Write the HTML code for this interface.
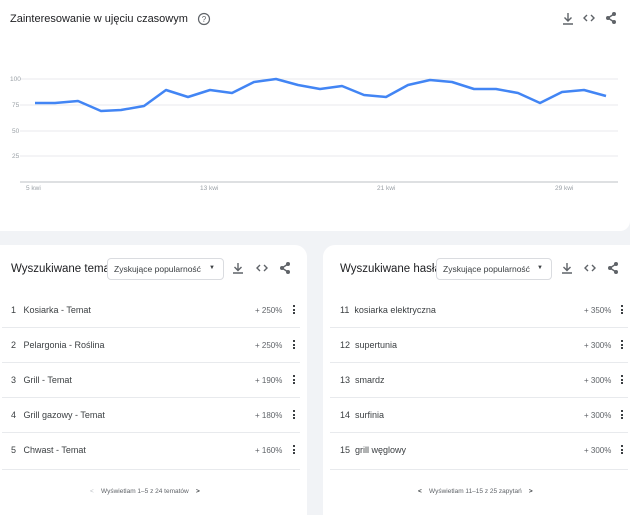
<!DOCTYPE html>
<html><head><meta charset="utf-8"><style>
*{margin:0;padding:0;box-sizing:border-box}
body{width:630px;height:504px;background:#f1f3f6;font-family:"Liberation Sans",sans-serif;position:relative;overflow:hidden;color:#202124}
.top{position:absolute;left:0;top:0;width:630px;height:231px;background:#fff;border-radius:0 0 10px 0}
.card{position:absolute;top:245px;height:270px;background:#fff}
.l{left:0;width:307px;border-radius:0 12px 0 0}
.r{left:323px;width:307px;border-radius:12px 0 0 0}
.ttl{position:absolute;top:263px;font-size:11.5px}
.dd{position:absolute;top:258px;height:22px;border:1px solid #dadce0;border-radius:4px;font-size:8.5px;padding:5px 6px;background:#fff;color:#3c4043;white-space:nowrap}
.dd span{position:absolute;right:8px;top:6px;font-size:6px}
.row{position:absolute;font-size:9px;color:#3c4043}
.pct{position:absolute;font-size:8px;color:#5f6368}
.div{position:absolute;height:1px;background:#e8eaed}
.dots{position:absolute;width:2px}
.dots i{display:block;width:2px;height:2px;background:#3c4043;margin-bottom:1.5px}
.pg{position:absolute;top:488px;font-size:6.5px;color:#5f6368}
</style></head><body>
<div class="top"></div>
<div style="position:absolute;left:10px;top:13px;font-size:11px;white-space:nowrap">Zainteresowanie w ujęciu czasowym</div>
<svg style="position:absolute;left:196px;top:11px" width="16" height="16" viewBox="0 0 16 16"><circle cx="8" cy="8" r="5.5" fill="none" stroke="#5f6368" stroke-width="1.2"/><text x="8" y="11" font-size="8" text-anchor="middle" fill="#5f6368" font-family="Liberation Sans">?</text></svg>
<svg style="position:absolute;left:0;top:0" width="630" height="230">
<g stroke="#5f6368" stroke-width="1.4" fill="none">
<path d="M568 13v8M564.5 17.5l3.5 3.5 3.5-3.5M563 24h10"/>
<path d="M587 15l-3 3 3 3M591 15l3 3-3 3"/>
<path d="M614 14l-6 4 6 4"/></g>
<g fill="#5f6368"><circle cx="614" cy="14" r="2"/><circle cx="614" cy="22" r="2"/><circle cx="608" cy="18" r="2"/></g>
<g stroke="#e8eaed" stroke-width="1"><line x1="20" y1="79" x2="618" y2="79"/><line x1="20" y1="105" x2="618" y2="105"/><line x1="20" y1="131" x2="618" y2="131"/><line x1="20" y1="156" x2="618" y2="156"/></g>
<line x1="20" y1="182" x2="618" y2="182" stroke="#bdc1c6"/>
<g font-size="6.5" fill="#9aa0a6" font-family="Liberation Sans"><text x="10" y="81">100</text><text x="12" y="107">75</text><text x="12" y="133">50</text><text x="12" y="158">25</text>
<text x="26" y="190">5 kwi</text><text x="200" y="190">13 kwi</text><text x="377" y="190">21 kwi</text><text x="555" y="190">29 kwi</text></g>
<polyline fill="none" stroke="#4285f4" stroke-width="2.5" stroke-linejoin="round" points="35,103 55,103 78,101 101,111 121,110 144,106 166,90 188,97 210,90 232,93 254,82 276,79 298,85 320,89 342,86 364,95 386,97 408,85 430,80 452,82 474,89 496,89 518,93 540,103 562,92 584,90 606,96"/>
</svg>

<div class="card l"></div><div class="card r"></div>
<div class="ttl" style="left:11px;width:96px;overflow:hidden;white-space:nowrap">Wyszukiwane tematy</div>
<div class="ttl" style="left:340px;white-space:nowrap">Wyszukiwane hasła</div>
<div class="dd" style="left:107px;width:117px">Zyskujące popularność <span>▼</span></div>
<div class="dd" style="left:436px;width:116px">Zyskujące popularność <span>▼</span></div>
<svg style="position:absolute;left:0;top:255px" width="630" height="30">
<g stroke="#5f6368" stroke-width="1.4" fill="none">
<path d="M238 8v7M234.5 12l3.5 3.5 3.5-3.5M233 18h10"/><path d="M260 10l-3 3 3 3M264 10l3 3-3 3"/><path d="M288 9l-6 4 6 4"/>
<path d="M567 8v7M563.5 12l3.5 3.5 3.5-3.5M562 18h10"/><path d="M588 10l-3 3 3 3M592 10l3 3-3 3"/><path d="M616 9l-6 4 6 4"/></g>
<g fill="#5f6368"><circle cx="288" cy="9" r="2"/><circle cx="288" cy="17" r="2"/><circle cx="282" cy="13" r="2"/><circle cx="616" cy="9" r="2"/><circle cx="616" cy="17" r="2"/><circle cx="610" cy="13" r="2"/></g>
</svg>

<div class="row" style="left:11px;top:305px">1&nbsp;&nbsp; Kosiarka - Temat</div>
<div class="row" style="left:11px;top:340px">2&nbsp;&nbsp; Pelargonia - Roślina</div>
<div class="row" style="left:11px;top:375px">3&nbsp;&nbsp; Grill - Temat</div>
<div class="row" style="left:11px;top:410px">4&nbsp;&nbsp; Grill gazowy - Temat</div>
<div class="row" style="left:11px;top:445px">5&nbsp;&nbsp; Chwast - Temat</div>
<div class="pct" style="left:255px;top:306px">+ 250%</div>
<div class="pct" style="left:255px;top:341px">+ 250%</div>
<div class="pct" style="left:255px;top:376px">+ 190%</div>
<div class="pct" style="left:255px;top:411px">+ 180%</div>
<div class="pct" style="left:255px;top:446px">+ 160%</div>
<div class="row" style="left:340px;top:305px">11&nbsp; kosiarka elektryczna</div>
<div class="row" style="left:340px;top:340px">12&nbsp; supertunia</div>
<div class="row" style="left:340px;top:375px">13&nbsp; smardz</div>
<div class="row" style="left:340px;top:410px">14&nbsp; surfinia</div>
<div class="row" style="left:340px;top:445px">15&nbsp; grill węglowy</div>
<div class="pct" style="left:584px;top:306px">+ 350%</div>
<div class="pct" style="left:584px;top:341px">+ 300%</div>
<div class="pct" style="left:584px;top:376px">+ 300%</div>
<div class="pct" style="left:584px;top:411px">+ 300%</div>
<div class="pct" style="left:584px;top:446px">+ 300%</div>
<div class="dots" style="left:293px;top:305px"><i></i><i></i><i></i></div>
<div class="dots" style="left:293px;top:340px"><i></i><i></i><i></i></div>
<div class="dots" style="left:293px;top:375px"><i></i><i></i><i></i></div>
<div class="dots" style="left:293px;top:410px"><i></i><i></i><i></i></div>
<div class="dots" style="left:293px;top:445px"><i></i><i></i><i></i></div>
<div class="dots" style="left:621px;top:305px"><i></i><i></i><i></i></div>
<div class="dots" style="left:621px;top:340px"><i></i><i></i><i></i></div>
<div class="dots" style="left:621px;top:375px"><i></i><i></i><i></i></div>
<div class="dots" style="left:621px;top:410px"><i></i><i></i><i></i></div>
<div class="dots" style="left:621px;top:445px"><i></i><i></i><i></i></div>
<div class="div" style="left:2px;width:298px;top:327px"></div>
<div class="div" style="left:2px;width:298px;top:362px"></div>
<div class="div" style="left:2px;width:298px;top:397px"></div>
<div class="div" style="left:2px;width:298px;top:432px"></div>
<div class="div" style="left:2px;width:298px;top:469px"></div>
<div class="div" style="left:330px;width:298px;top:327px"></div>
<div class="div" style="left:330px;width:298px;top:362px"></div>
<div class="div" style="left:330px;width:298px;top:397px"></div>
<div class="div" style="left:330px;width:298px;top:432px"></div>
<div class="div" style="left:330px;width:298px;top:469px"></div>
<div class="pg" style="left:90px"><span style="color:#bdc1c6">&lt;</span>&nbsp;&nbsp;&nbsp; Wyświetlam 1–5 z 24 tematów &nbsp;&nbsp;&nbsp;<b style="color:#3c4043">&gt;</b></div>
<div class="pg" style="left:418px"><b style="color:#3c4043">&lt;</b>&nbsp;&nbsp;&nbsp; Wyświetlam 11–15 z 25 zapytań &nbsp;&nbsp;&nbsp;<b style="color:#3c4043">&gt;</b></div>
</body></html>
